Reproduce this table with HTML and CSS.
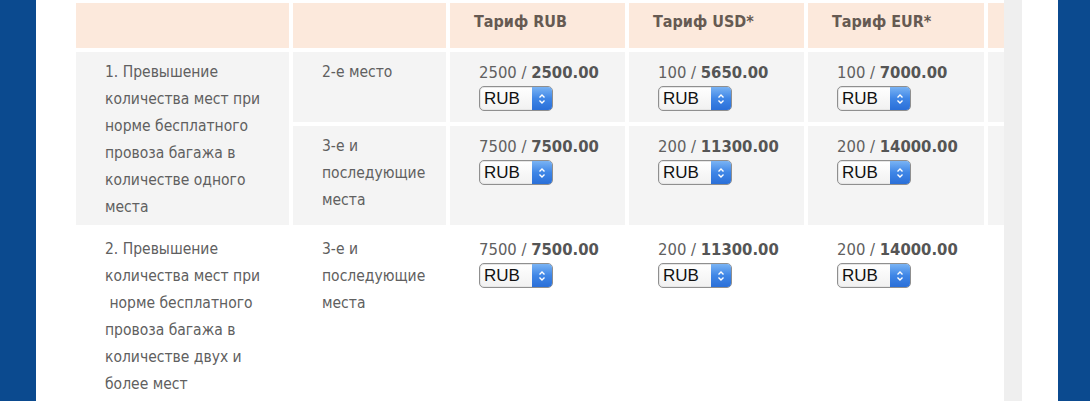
FILE: index.html
```html
<!DOCTYPE html>
<html lang="ru">
<head>
<meta charset="utf-8">
<title>Тарифы</title>
<link rel="stylesheet" href="styles.css">
</head>
<body>
<div class="band"></div>
<div class="page">
  <div class="wrap">
    <table class="tariffs">
      <colgroup>
        <col class="c1"><col class="c2"><col class="c3"><col class="c4"><col class="c5"><col class="c6">
      </colgroup>
      <thead>
        <tr>
          <th></th><th></th><th>Тариф RUB</th><th>Тариф USD*</th><th>Тариф EUR*</th><th></th>
        </tr>
      </thead>
      <tbody>
        <tr class="grey first">
          <td rowspan="2">1. Превышение количества мест при норме бесплатного провоза багажа в количестве одного места</td>
          <td>2-е место</td>
          <td class="num">2500 / <b>2500.00</b><br><span class="sel"><span class="val">RUB</span><span class="btn"><svg width="8" height="12" viewBox="0 0 8 12"><path d="M1.5 4.5 4 2l2.5 2.5M1.5 7.5 4 10l2.5-2.5" fill="none" stroke="#fff" stroke-width="1.4"/></svg></span></span></td>
          <td class="num">100 / <b>5650.00</b><br><span class="sel"><span class="val">RUB</span><span class="btn"><svg width="8" height="12" viewBox="0 0 8 12"><path d="M1.5 4.5 4 2l2.5 2.5M1.5 7.5 4 10l2.5-2.5" fill="none" stroke="#fff" stroke-width="1.4"/></svg></span></span></td>
          <td class="num">100 / <b>7000.00</b><br><span class="sel"><span class="val">RUB</span><span class="btn"><svg width="8" height="12" viewBox="0 0 8 12"><path d="M1.5 4.5 4 2l2.5 2.5M1.5 7.5 4 10l2.5-2.5" fill="none" stroke="#fff" stroke-width="1.4"/></svg></span></span></td>
          <td></td>
        </tr>
        <tr class="grey">
          <td>3-е и последующие места</td>
          <td class="num">7500 / <b>7500.00</b><br><span class="sel"><span class="val">RUB</span><span class="btn"><svg width="8" height="12" viewBox="0 0 8 12"><path d="M1.5 4.5 4 2l2.5 2.5M1.5 7.5 4 10l2.5-2.5" fill="none" stroke="#fff" stroke-width="1.4"/></svg></span></span></td>
          <td class="num">200 / <b>11300.00</b><br><span class="sel"><span class="val">RUB</span><span class="btn"><svg width="8" height="12" viewBox="0 0 8 12"><path d="M1.5 4.5 4 2l2.5 2.5M1.5 7.5 4 10l2.5-2.5" fill="none" stroke="#fff" stroke-width="1.4"/></svg></span></span></td>
          <td class="num">200 / <b>14000.00</b><br><span class="sel"><span class="val">RUB</span><span class="btn"><svg width="8" height="12" viewBox="0 0 8 12"><path d="M1.5 4.5 4 2l2.5 2.5M1.5 7.5 4 10l2.5-2.5" fill="none" stroke="#fff" stroke-width="1.4"/></svg></span></span></td>
          <td></td>
        </tr>
        <tr>
          <td>2. Превышение количества мест при<br>&nbsp;норме бесплатного провоза багажа в количестве двух и более мест</td>
          <td>3-е и последующие места</td>
          <td class="num">7500 / <b>7500.00</b><br><span class="sel"><span class="val">RUB</span><span class="btn"><svg width="8" height="12" viewBox="0 0 8 12"><path d="M1.5 4.5 4 2l2.5 2.5M1.5 7.5 4 10l2.5-2.5" fill="none" stroke="#fff" stroke-width="1.4"/></svg></span></span></td>
          <td class="num">200 / <b>11300.00</b><br><span class="sel"><span class="val">RUB</span><span class="btn"><svg width="8" height="12" viewBox="0 0 8 12"><path d="M1.5 4.5 4 2l2.5 2.5M1.5 7.5 4 10l2.5-2.5" fill="none" stroke="#fff" stroke-width="1.4"/></svg></span></span></td>
          <td class="num">200 / <b>14000.00</b><br><span class="sel"><span class="val">RUB</span><span class="btn"><svg width="8" height="12" viewBox="0 0 8 12"><path d="M1.5 4.5 4 2l2.5 2.5M1.5 7.5 4 10l2.5-2.5" fill="none" stroke="#fff" stroke-width="1.4"/></svg></span></span></td>
          <td></td>
        </tr>
      </tbody>
    </table>
  </div>
  <div class="strip"></div>
</div>
</body>
</html>
```
FILE: styles.css
```css
html, body {
  margin: 0;
  height: 100%;
}
body {
  background: #0b4a8f;
  display: flex;
  overflow: hidden;
  font-family: "DejaVu Sans", Tahoma, sans-serif;
  font-stretch: condensed;
}
.band {
  width: 36px;
  flex: none;
}
.page {
  width: 1022px;
  flex: none;
  background: #fff;
  display: flex;
}
.wrap {
  width: 932px;
  padding-left: 36px;
  overflow: hidden;
  flex: none;
}
.strip {
  width: 18px;
  background: #efefef;
  flex: none;
}
.tariffs {
  table-layout: fixed;
  border-collapse: separate;
  border-spacing: 4px;
  width: 1068px;
  margin-top: -1px;
  font-size: 15.5px;
  line-height: 27px;
  color: #606060;
}
.c1 { width: 213px; }
.c2 { width: 153px; }
.c3 { width: 175px; }
.c4 { width: 175px; }
.c5 { width: 176px; }
.c6 { width: 152px; }
th, td {
  box-sizing: border-box;
  vertical-align: top;
  text-align: left;
}
th {
  background: #fce9dc;
  padding: 5px 10px 13px 24px;
  font-size: 16px;
  font-weight: bold;
  color: #665a52;
  height: 45px;
}
td {
  padding: 7px 10px 4px 29px;
}
td.num {
  font-size: 16.5px;
}
.first td {
  height: 70px;
}
.grey td {
  background: #f4f4f4;
}
b {
  color: #555;
}
.sel {
  display: inline-flex;
  width: 74px;
  height: 25px;
  box-sizing: border-box;
  border: 1px solid #8f8f8f;
  border-radius: 5px;
  background: linear-gradient(#ffffff, #f1f1f1);
  vertical-align: top;
  overflow: hidden;
  box-shadow: inset 0 0 0 1px #e6e6e6;
}
.val {
  flex: 1;
  font-family: "Liberation Sans", Arial, sans-serif;
  font-stretch: normal;
  font-size: 17px;
  line-height: 23px;
  color: #111;
  padding-left: 4px;
}
.btn {
  width: 20px;
  flex: none;
  background: linear-gradient(#79b3f4, #3f86e6 50%, #2a6fd8);
  display: flex;
  align-items: center;
  justify-content: center;
}
```
